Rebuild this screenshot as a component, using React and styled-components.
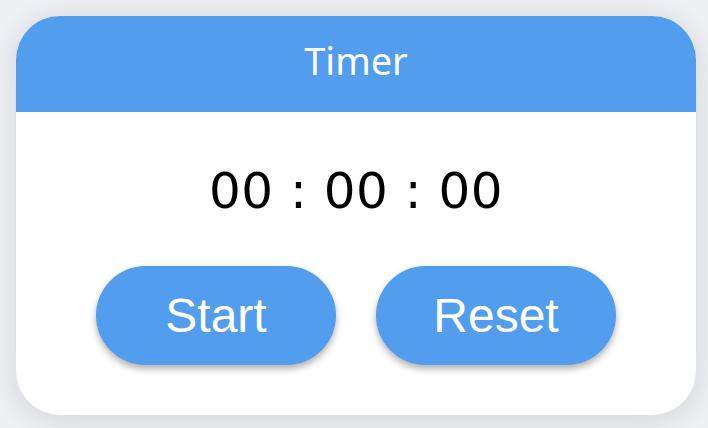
import React from 'react'
import styled, { createGlobalStyle } from 'styled-components'

const GlobalStyle = createGlobalStyle`
  html, body {
    margin: 0;
    padding: 0;
    background-color: #eff0f3;
  }
`

const Page = () => {
  return (
    <>
      <GlobalStyle />
      <Wrapper>
        <Card>
          <Header>
            <Title>Timer</Title>
          </Header>
          <Body>
            <Display>00 : 00 : 00</Display>
            <ButtonRow>
              <ActionButton>Start</ActionButton>
              <ActionButton>Reset</ActionButton>
            </ButtonRow>
          </Body>
        </Card>
      </Wrapper>
    </>
  )
}

export default Page

const Wrapper = styled.div`
  width: 708px;
  height: 428px;
  padding: 16px;
  box-sizing: border-box;
`

const Card = styled.div`
  width: 680px;
  height: 399px;
  border-radius: 44px;
  overflow: hidden;
  background-color: #ffffff;
  box-shadow: 0 4px 28px rgba(60, 64, 80, 0.16);
  display: flex;
  flex-direction: column;
`

const Header = styled.div`
  height: 96px;
  box-sizing: border-box;
  padding-top: 25px;
  background-color: #529ded;
  display: flex;
  justify-content: center;
`

const Title = styled.h1`
  margin: 0;
  font-family: "Noto Sans", sans-serif;
  font-weight: 400;
  font-size: 38px;
  line-height: 1;
  color: #ffffff;
`

const Body = styled.div`
  flex: 1;
  display: flex;
  flex-direction: column;
  align-items: center;
  padding-top: 54px;
`

const Display = styled.div`
  font-family: "DejaVu Sans", sans-serif;
  font-size: 50px;
  line-height: 1;
  letter-spacing: 0.5px;
  color: #000000;
  white-space: pre;
`

const ButtonRow = styled.div`
  display: flex;
  gap: 40px;
  margin-top: 50px;
`

const ActionButton = styled.button`
  width: 240px;
  height: 99px;
  border: none;
  border-radius: 50px;
  background-color: #529ded;
  color: #ffffff;
  font-family: "Liberation Sans", Arial, sans-serif;
  font-size: 48px;
  box-shadow: 0 4px 7px rgba(0, 0, 0, 0.3);
  cursor: pointer;
`
